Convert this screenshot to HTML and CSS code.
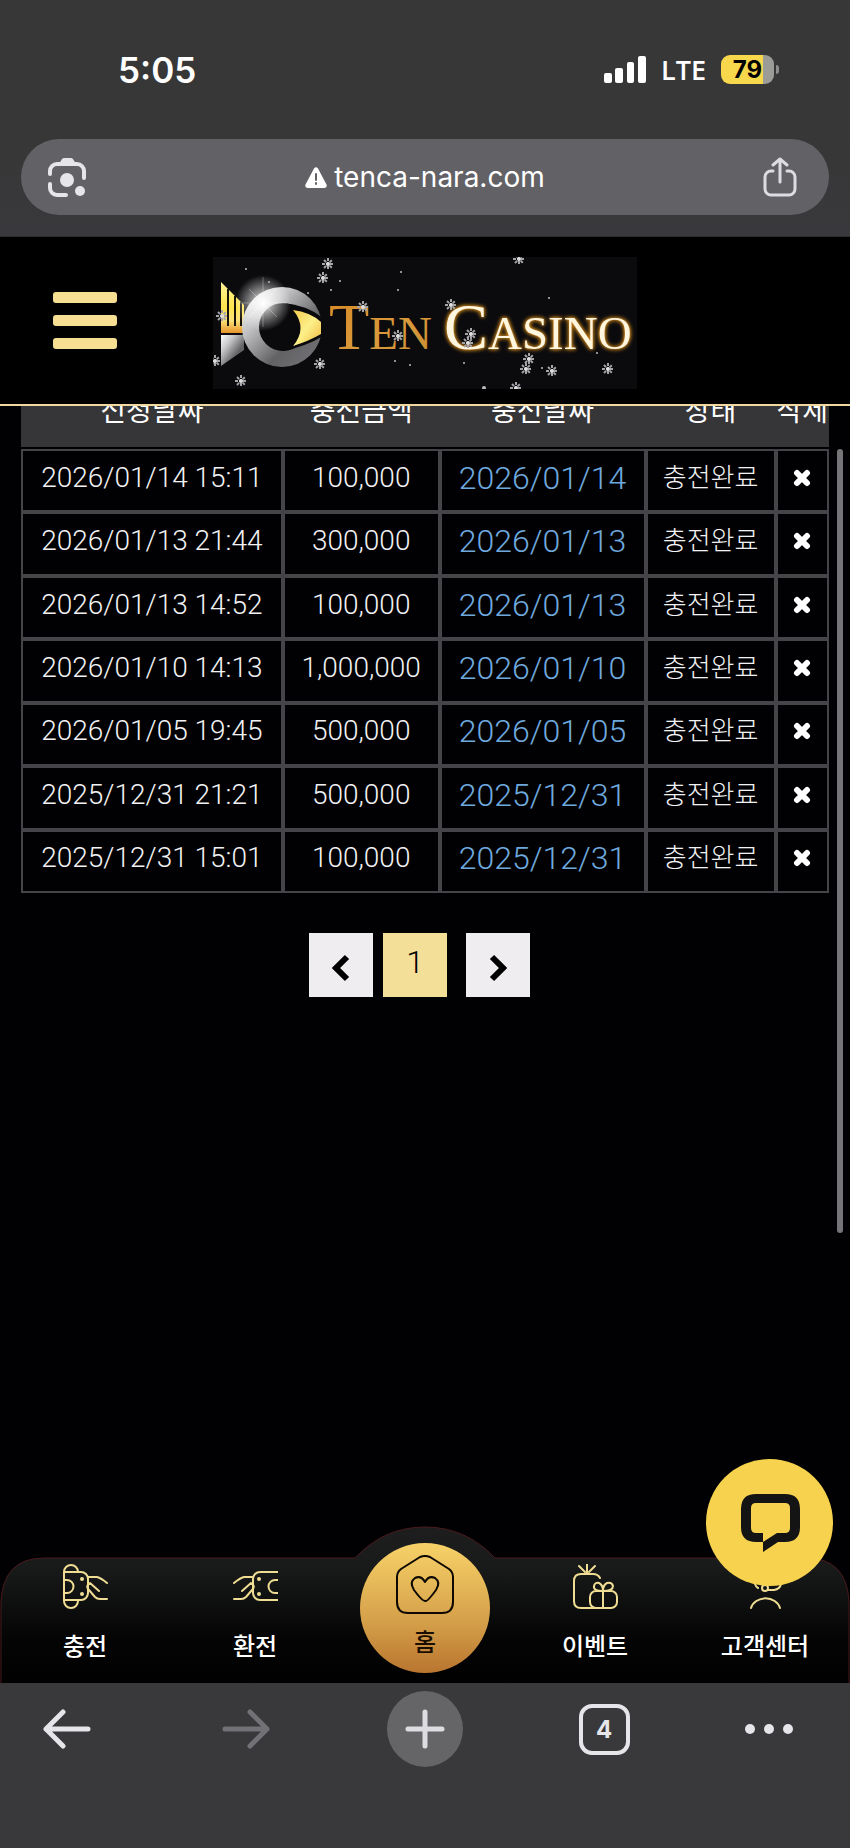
FILE: index.html
```html
<!DOCTYPE html>
<html lang="ko">
  <head>
    <meta charset="UTF-8" />
    <meta name="viewport" content="width=device-width, initial-scale=1.0" />
    <title>Ten Casino</title>
    <link rel="stylesheet" href="styles.css">
  </head>
  <body>
    <div class="browser-top">
      <div class="status-bar">
        <span class="time">5:05</span>
        <div class="status-icons">
          <svg class="signal" width="42" height="27" viewBox="0 0 42 27" fill="#fff">
            <rect x="0" y="17" width="8" height="10" rx="2" />
            <rect x="11" y="12" width="8" height="15" rx="2" />
            <rect x="23" y="6" width="7" height="21" rx="2" />
            <rect x="34" y="0" width="8" height="27" rx="2" />
          </svg>
          <span class="network">LTE</span>
          <div class="battery"><span>79</span></div>
          <div class="battery-tip"></div>
        </div>
      </div>
      <div class="address-bar">
        <button class="icon-btn" aria-label="Lens">
          <svg width="39" height="39" viewBox="0 0 39 39" fill="none" stroke="#e6e5ea" stroke-width="4" stroke-linecap="round">
            <path d="M2 16v-3a7 7 0 0 1 7-7h20a7 7 0 0 1 7 7v7" />
            <path d="M2 26v4a7 7 0 0 0 7 7h9" />
            <path d="M11 6l3-5q1-1 2-1h7q1 0 2 1l3 5z" fill="#e6e5ea" stroke="none" />
            <circle cx="19" cy="22" r="7" fill="#e6e5ea" stroke="none" />
            <circle cx="32" cy="33" r="5" fill="#e6e5ea" stroke="none" />
          </svg>
        </button>
        <div class="url">
          <svg width="22" height="21" viewBox="0 0 22 21">
            <path d="M9 1.500q2-2.500 4 0l8.500 16q1 3-2 3.500h-17q-3-.5-2-3.500z" fill="#fff" />
            <path d="M11 7v6M11 16v1" stroke="#626166" stroke-width="2" stroke-linecap="round" />
          </svg>
          <span>tenca-nara.com</span>
        </div>
        <button class="icon-btn" aria-label="Share">
          <svg width="34" height="40" viewBox="0 0 34 40" fill="none" stroke="#dddce1" stroke-width="3" stroke-linecap="round" stroke-linejoin="round">
            <path d="M10 14H8a6 6 0 0 0-6 6v12a6 6 0 0 0 6 6h18a6 6 0 0 0 6-6V20a6 6 0 0 0-6-6h-2" />
            <path d="M17 25V2M10 8l7-6 7 6" />
          </svg>
        </button>
      </div>
    </div>

    <header class="site-header">
      <button class="menu-btn" aria-label="메뉴">
        <span></span>
        <span></span>
        <span></span>
      </button>
      <a class="logo" href="#" aria-label="Ten Casino">
        <svg width="424" height="132" viewBox="0 0 424 132">
          <defs>
            <linearGradient id="silver" x1="0" y1="0" x2="1" y2="1">
              <stop offset="0" stop-color="#fff" />
              <stop offset=".3" stop-color="#c5c5c7" />
              <stop offset=".65" stop-color="#626265" />
              <stop offset="1" stop-color="#77777b" />
            </linearGradient>
            <linearGradient id="fork" x1="0" y1="0" x2="0" y2="1">
              <stop offset="0" stop-color="#fff39a" />
              <stop offset=".5" stop-color="#fde54a" />
              <stop offset=".75" stop-color="#fbe27a" />
              <stop offset="1" stop-color="#e8942c" />
            </linearGradient>
            <linearGradient id="leaf" x1="0" y1="0" x2="1" y2="1">
              <stop offset="0" stop-color="#f5ca4a" />
              <stop offset=".5" stop-color="#fdf08a" />
              <stop offset="1" stop-color="#f0b53c" />
            </linearGradient>
            <linearGradient id="goldText" x1="0" y1="0" x2="1" y2="1">
              <stop offset="0" stop-color="#d98a25" />
              <stop offset=".6" stop-color="#d99a3c" />
              <stop offset="1" stop-color="#c68a2c" />
            </linearGradient>
            <radialGradient id="flare">
              <stop offset="0" stop-color="#fff" />
              <stop offset=".4" stop-color="#fff" stop-opacity=".55" />
              <stop offset="1" stop-color="#fff" stop-opacity="0" />
            </radialGradient>
            <g id="flake" stroke="#a5a5a8" stroke-width="2" stroke-dasharray="3 1">
              <path d="M0-6V6M-6 0H6M-4-4L4 4M-4 4L4-4" />
              <circle r="2" fill="#ddd" stroke="none" />
            </g>
          </defs>
          <rect width="424" height="132" fill="#0b0b0e" />
          <path d="M8 25l23 23v28H8z" fill="url(#fork)" />
          <path d="M15 32v37M22 39v30M28 45v24" stroke="#17130a" stroke-width="2" />
          <path d="M8 78h23v15L8 109z" fill="url(#silver)" />
          <circle cx="69" cy="70" r="40" fill="url(#silver)" />
          <circle cx="70" cy="70" r="24" fill="#0a0a0c" />
          <path d="M70 46q24 2 40 15v18q-16 10-40 15z" fill="#0a0a0c" />
          <path d="M80 53q17 2 28 12v12q-12 7-28 12 15-18 0-36z" fill="url(#leaf)" />
          <circle cx="50" cy="46" r="28" fill="url(#flare)" />
          <path d="M50 20v50M26 46h48M36 32l28 28M36 60l28-28" stroke="#fff" stroke-opacity=".3" />
          <text class="logo-ten" x="116" y="92">T<tspan class="logo-small">EN</tspan></text>
          <text class="logo-casino" x="231" y="92">C<tspan class="logo-small">ASINO</tspan></text>
          <use href="#flake" x="115" y="7" />
          <use href="#flake" x="110" y="21" />
          <use href="#flake" x="150" y="50" />
          <use href="#flake" x="9" y="59" />
          <use href="#flake" x="2" y="104" />
          <use href="#flake" x="28" y="124" />
          <use href="#flake" x="107" y="107" />
          <use href="#flake" x="185" y="79" />
          <use href="#flake" x="306" y="2" />
          <use href="#flake" x="238" y="48" />
          <use href="#flake" x="258" y="77" />
          <use href="#flake" x="255" y="86" />
          <use href="#flake" x="316" y="102" />
          <use href="#flake" x="313" y="112" />
          <use href="#flake" x="339" y="114" />
          <use href="#flake" x="395" y="112" />
          <use href="#flake" x="303" y="131" />
          <g fill="#bbb">
            <circle cx="33" cy="12" r="1" />
            <circle cx="56" cy="25" r="1" />
            <circle cx="95" cy="36" r="1" />
            <circle cx="118" cy="33" r="1" />
            <circle cx="127" cy="24" r="1" />
            <circle cx="185" cy="33" r="1" />
            <circle cx="188" cy="15" r="1" />
            <circle cx="182" cy="104" r="1" />
            <circle cx="197" cy="108" r="1" />
            <circle cx="336" cy="41" r="1" />
            <circle cx="384" cy="96" r="1" />
            <circle cx="329" cy="111" r="1" />
            <circle cx="251" cy="106" r="1" />
            <circle cx="271" cy="131" r="2" />
          </g>
        </svg>
      </a>
    </header>

    <main class="content">
      <table class="history">
        <colgroup>
          <col class="col-requested" />
          <col class="col-amount" />
          <col class="col-charged" />
          <col class="col-status" />
          <col class="col-delete" />
        </colgroup>
        <thead>
          <tr>
            <th>신청날짜</th>
            <th>충전금액</th>
            <th>충전날짜</th>
            <th>상태</th>
            <th>삭제</th>
          </tr>
        </thead>
        <tbody id="history-rows"></tbody>
      </table>

      <div class="pagination">
        <button class="page-btn" aria-label="이전">
          <svg width="18" height="28" viewBox="0 0 18 28" fill="none" stroke="#000" stroke-width="6">
            <path d="M15 3L4 14l11 11" />
          </svg>
        </button>
        <button class="page-btn current">1</button>
        <button class="page-btn next" aria-label="다음">
          <svg width="18" height="28" viewBox="0 0 18 28" fill="none" stroke="#000" stroke-width="6">
            <path d="M3 3l11 11L3 25" />
          </svg>
        </button>
      </div>
      <div class="scrollbar"></div>
    </main>

    <nav class="bottom-nav">
      <svg class="nav-bg" viewBox="0 0 850 157" preserveAspectRatio="none">
        <defs>
          <linearGradient id="navFill" x1="0" y1="0" x2="0" y2="1">
            <stop offset="0" stop-color="#1e1e1e" />
            <stop offset=".25" stop-color="#191a1a" />
            <stop offset=".7" stop-color="#050505" />
            <stop offset="1" stop-color="#000" />
          </linearGradient>
        </defs>
        <path d="M1 158V76Q3 32 44 32H355Q384 1 425 1T495 32H806Q847 32 849 76V158" fill="url(#navFill)" stroke="#4a1a1e" stroke-width="1" />
      </svg>
      <a class="nav-item" href="#">
        <svg width="45" height="45" viewBox="0 0 45 45">
          <path d="M1 8v29M1 8a7 7 0 0 1 14 0M1 37a7 7 0 0 0 14 0M1 8h17a7 7 0 0 1 7 7v14a7 7 0 0 1-7 7H1M1 16h3a6 6 0 0 1 0 13H1" />
          <path d="M25 13h9q4 1 10 6M36 27l-9-8q-5 3-1 7l6 7q2 2 5 2h7" />
          <circle class="dot" cx="19" cy="15" r="2" />
          <circle class="dot" cx="19" cy="30" r="2" />
        </svg>
        <span>충전</span>
      </a>
      <a class="nav-item" href="#">
        <svg width="45" height="45" viewBox="0 0 45 45">
          <path d="M45 8H27a7 7 0 0 0-7 7v14a7 7 0 0 0 7 7h18M45 16h-3a6 6 0 0 0 0 13h3" />
          <path d="M20 13h-9q-4 1-10 6M9 27l9-8q5 3 1 7l-6 7q-2 2-5 2H1" />
          <circle class="dot" cx="26" cy="15" r="2" />
          <circle class="dot" cx="26" cy="30" r="2" />
        </svg>
        <span>환전</span>
      </a>
      <a class="nav-item home" href="#">
        <svg width="60" height="60" viewBox="0 0 60 60">
          <path d="M25 2q5-2 10 0l19 12q4 3 4 8v25q0 11-11 11H13Q2 58 2 47V22q0-5 4-8z" />
          <path d="M30 46q-3 0-11-11-5-8 1-12 6-3 10 4 4-7 10-4 6 4 1 12-8 11-10 11z" />
        </svg>
        <span>홈</span>
      </a>
      <a class="nav-item" href="#">
        <svg width="45" height="45" viewBox="0 0 45 45">
          <path d="M27 14q-2-4-7-4H8q-7 0-7 7v20q0 7 7 7h28M14 9V0M12 8L6 2M16 8l6-6" />
          <rect x="17" y="27" width="27" height="17" rx="6" />
          <path d="M30 44V27q-10 0-9-5 1-4 5-3 4 2 4 8 0-6 4-8 5-1 6 3 0 5-10 5" />
        </svg>
        <span>이벤트</span>
      </a>
      <a class="nav-item" href="#">
        <svg width="45" height="45" viewBox="0 0 45 45">
          <path d="M8 44a15 13 0 0 1 29 0M12 20q1 3 3 4M25 26h6q6-1 7-6M12 19a12 12 0 0 1 24 0" />
          <circle cx="22" cy="24" r="3" />
        </svg>
        <span>고객센터</span>
      </a>
      <button class="chat-btn" aria-label="채팅">
        <svg width="60" height="60" viewBox="0 0 60 60">
          <path d="M16 1Q1 1 1 16v18q0 15 15 15h7v10l15-10h7q15 0 15-15V16Q60 1 45 1zM16 10h29q5 0 5 5v20q0 5-5 5h-8l-14 9V40h-7q-5 0-5-5V15q0-5 5-5z" fill="#141414" fill-rule="evenodd" />
        </svg>
      </button>
    </nav>

    <div class="browser-bottom">
      <button class="tool-btn" aria-label="Back">
        <svg width="48" height="40" viewBox="0 0 48 40" stroke="#e6e5ea">
          <path d="M45 20H3M20 3L3 20l17 17" />
        </svg>
      </button>
      <button class="tool-btn" aria-label="Forward">
        <svg width="48" height="40" viewBox="0 0 48 40" stroke="#727176">
          <path d="M3 20h42M28 3l17 17-17 17" />
        </svg>
      </button>
      <button class="tool-btn new-tab" aria-label="New tab">
        <svg width="40" height="40" viewBox="0 0 40 40" stroke="#dddce1">
          <path d="M20 3v34M3 20h34" />
        </svg>
      </button>
      <button class="tool-btn" aria-label="Tabs"><span class="tab-count">4</span></button>
      <button class="tool-btn more" aria-label="More">
        <svg width="48" height="12" viewBox="0 0 48 12">
          <circle cx="5" cy="6" r="5" />
          <circle cx="24" cy="6" r="5" />
          <circle cx="43" cy="6" r="5" />
        </svg>
      </button>
    </div>

    <script src="script.js"></script>
  </body>
</html>
```

FILE: styles.css
```css
* {
  box-sizing: border-box;
}

body {
  margin: 0;
  min-height: 100vh;
  display: flex;
  flex-direction: column;
  background: #010103;
  color: #fff;
  font-family: Roboto, "Noto Sans CJK KR", sans-serif;
}

button {
  padding: 0;
  border: none;
  background: none;
  color: inherit;
  font: inherit;
  cursor: pointer;
}

a {
  color: inherit;
  text-decoration: none;
}

svg {
  display: block;
}

/* browser chrome, top */
.browser-top {
  padding: 0 21px 21px;
  background: linear-gradient(#373737 60%, #39383c);
  border-bottom: 1px solid #2c2c2e;
}

.status-bar {
  display: flex;
  align-items: center;
  justify-content: space-between;
  height: 139px;
  padding: 0 50px 0 97px;
  font-family: Inter, sans-serif;
}

.time {
  font-size: 35px;
  font-weight: 600;
}

.status-icons {
  display: flex;
  align-items: center;
}

.network {
  margin: 0 15px;
  font-family: "Open Sans", sans-serif;
  font-size: 27px;
  font-weight: 600;
}

.battery {
  width: 53px;
  height: 29px;
  border-radius: 9px;
  background: linear-gradient(90deg, #f7d74c 79%, #9b9b97 79%);
  color: #000;
  font-size: 24px;
  font-weight: 700;
  line-height: 30px;
  text-align: center;
}

.battery-tip {
  width: 3px;
  height: 9px;
  margin-left: 2px;
  border-radius: 0 3px 3px 0;
  background: #8d8d8d;
}

.address-bar {
  display: flex;
  align-items: center;
  justify-content: space-between;
  height: 76px;
  padding: 0 32px 0 27px;
  border-radius: 38px;
  background: #626166;
}

.url {
  display: flex;
  align-items: center;
  gap: 7px;
  font-family: Inter, sans-serif;
  font-size: 28px;
  line-height: 34px;
}

/* site header */
.site-header {
  display: flex;
  align-items: center;
  height: 169px;
  padding: 0 53px;
  border-bottom: 2px solid #f0d9a0;
  background: #000;
}

.menu-btn {
  display: flex;
  flex-direction: column;
  gap: 12px;
  width: 64px;
}

.menu-btn span {
  height: 11px;
  border-radius: 3px;
  background: #f6df92;
}

.logo {
  margin: 0 auto;
  padding: 5px 64px 0 0;
}

.logo text {
  font-family: "Liberation Serif", serif;
  font-size: 66px;
}

.logo .logo-small {
  font-size: 47px;
}

.logo-ten {
  fill: url(#goldText);
}

.logo-casino {
  fill: #fff6e0;
  filter: drop-shadow(0 0 2px #d08a1c) drop-shadow(0 0 1px #b87818);
}

/* charge history */
.content {
  position: relative;
  flex: 1;
  padding: 0 21px;
  overflow: hidden;
}

/* header row is scrolled partly under the site header */
.history {
  width: 100%;
  height: 508px;
  margin-top: -21px;
  table-layout: fixed;
  border-spacing: 0;
  font-size: 28px;
  font-weight: 300;
  line-height: 36px;
  text-align: center;
}

.col-requested {
  width: 32.4%;
}

.col-amount {
  width: 19.4%;
}

.col-charged {
  width: 25.5%;
}

.col-status {
  width: 16.1%;
}

.col-delete {
  width: 6.6%;
}

.history th {
  height: 64px;
  padding: 0 0 8px;
  border-bottom: 2px solid #010103;
  background: #363538;
  font-size: 28px;
  font-weight: 400;
  white-space: nowrap;
}

.history td {
  height: 63px;
  padding: 0 0 6px;
  border: 2px solid #454448;
  color: #f2f2f4;
  white-space: nowrap;
}

.history .charged {
  color: #6ea9de;
  font-size: 32px;
}

.history .status {
  font-size: 26px;
}

.delete-btn {
  display: block;
  margin: 0 auto;
}

.pagination {
  display: flex;
  justify-content: center;
  gap: 10px;
  margin: 40px 0;
  padding-right: 11px;
}

.page-btn {
  display: flex;
  align-items: center;
  justify-content: center;
  width: 64px;
  height: 64px;
  padding-top: 6px;
  background: #efedf0;
  color: #000;
}

.page-btn.current {
  padding: 0 0 6px;
  background: #f4df98;
  font-size: 32px;
  font-weight: 300;
}

.page-btn.next {
  margin-left: 9px;
}

.scrollbar {
  position: absolute;
  top: 43px;
  right: 7px;
  width: 6px;
  height: 784px;
  border-radius: 3px;
  background: #757478;
}

/* site bottom nav */
.bottom-nav {
  position: relative;
  display: grid;
  grid-template-columns: repeat(5, 1fr);
  height: 157px;
}

.nav-bg {
  position: absolute;
  width: 100%;
  height: 100%;
}

.nav-item {
  position: relative;
  display: flex;
  flex-direction: column;
  align-items: center;
  gap: 20px;
  padding-top: 38px;
  font-size: 24px;
  font-weight: 500;
  line-height: 36px;
}

.nav-item svg {
  fill: none;
  stroke: #eedd92;
  stroke-width: 2;
  stroke-linecap: round;
  stroke-linejoin: round;
}

.nav-item .dot {
  fill: #eedd92;
  stroke: none;
}

.nav-item.home {
  justify-self: center;
  gap: 10px;
  width: 130px;
  height: 130px;
  margin-top: 17px;
  padding-top: 12px;
  border-radius: 50%;
  background: linear-gradient(#f7d268, #d5a04a 60%, #b9752f);
  color: #1a0e02;
}

.nav-item.home svg {
  stroke: #0d0802;
}

.chat-btn {
  position: absolute;
  top: -67px;
  right: 17px;
  display: flex;
  align-items: center;
  justify-content: center;
  width: 127px;
  height: 127px;
  border-radius: 50%;
  background: #f7d24e;
}

/* browser chrome, bottom */
.browser-bottom {
  display: flex;
  justify-content: space-between;
  height: 165px;
  padding: 8px 29px 0;
  background: #39383a;
}

.tool-btn {
  display: flex;
  align-items: center;
  justify-content: center;
  width: 76px;
  height: 76px;
  border-radius: 50%;
}

.tool-btn svg {
  fill: none;
  stroke-width: 5;
  stroke-linecap: round;
  stroke-linejoin: round;
}

.new-tab {
  background: #656467;
}

.tab-count {
  width: 51px;
  height: 51px;
  border: 4px solid #e6e5ea;
  border-radius: 13px;
  color: #e6e5ea;
  font-family: Inter, sans-serif;
  font-size: 24px;
  font-weight: 700;
  line-height: 44px;
}

.tool-btn.more {
  justify-content: flex-start;
}

.tool-btn.more svg {
  fill: #e6e5ea;
}
```

FILE: script.js
```js
const history_rows = [
  ["2026/01/14 15:11", "100,000", "2026/01/14"],
  ["2026/01/13 21:44", "300,000", "2026/01/13"],
  ["2026/01/13 14:52", "100,000", "2026/01/13"],
  ["2026/01/10 14:13", "1,000,000", "2026/01/10"],
  ["2026/01/05 19:45", "500,000", "2026/01/05"],
  ["2025/12/31 21:21", "500,000", "2025/12/31"],
  ["2025/12/31 15:01", "100,000", "2025/12/31"],
];

const rowsEl = document.getElementById("history-rows");

history_rows.forEach(([requested, amount, charged]) => {
  const row = document.createElement("tr");
  row.innerHTML = `
    <td>${requested}</td>
    <td>${amount}</td>
    <td class="charged">${charged}</td>
    <td class="status">충전완료</td>
    <td>
      <button class="delete-btn" aria-label="삭제">
        <svg width="18" height="18" viewBox="0 0 18 18" stroke="#fff" stroke-width="6" stroke-linecap="round">
          <path d="M4 4l10 10M14 4L4 14" />
        </svg>
      </button>
    </td>
  `;
  rowsEl.appendChild(row);
});
```
